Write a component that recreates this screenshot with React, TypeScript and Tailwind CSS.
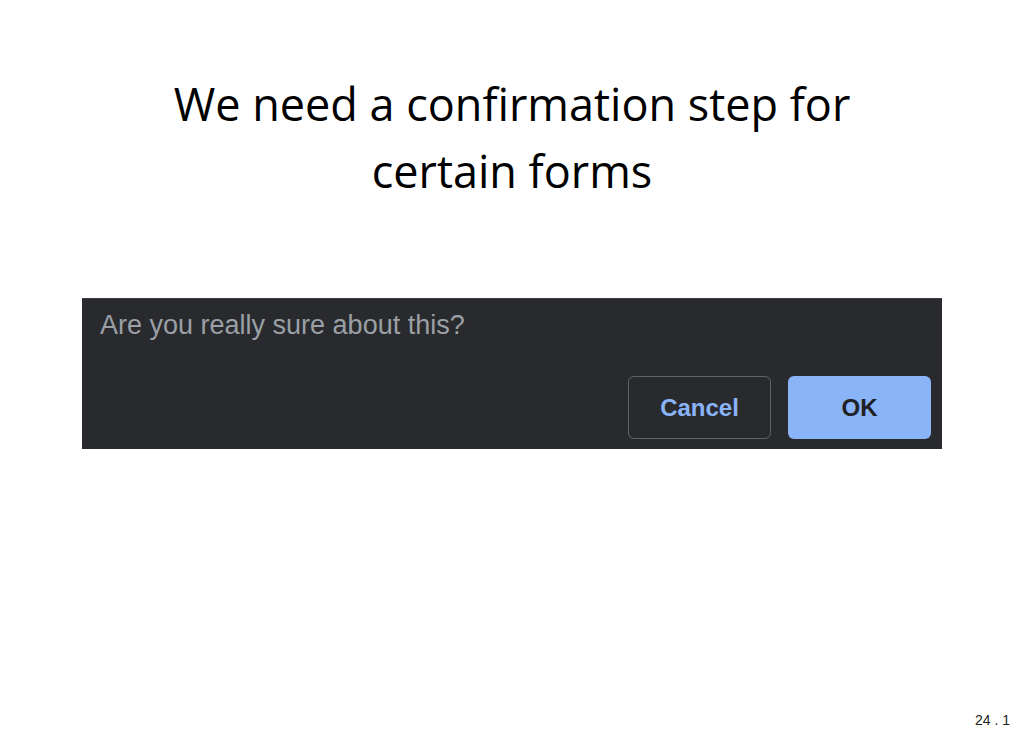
import React from 'react';

export default function App() {
  return (
    <div className="relative h-[747px] w-full overflow-hidden bg-white">
      <div className="flex flex-col items-center pt-[70px]">
        {/* Slide title */}
        <h1
          className="text-center text-[45px] leading-[67px] text-black"
          style={{ fontFamily: '"Open Sans", "Noto Sans", sans-serif' }}
        >
          We need a confirmation step for
          <br />
          certain forms
        </h1>

        {/* Browser confirm dialog screenshot */}
        <div
          className="mt-[94px] flex h-[151px] w-[860px] flex-col border-t border-[#3c3d40] bg-[#292a2d] pl-[18px] pr-[11px] pt-[10px]"
          style={{ fontFamily: '"Liberation Sans", Arial, sans-serif' }}
        >
          <p className="text-[27px] leading-[32px] text-[#9aa0a6]">Are you really sure about this?</p>
          <div className="mt-[35px] flex justify-end gap-[17px]">
            <button className="h-[63px] w-[143px] rounded-[6px] border border-[#5f6368] text-[24px] font-semibold text-[#8ab4f8]">
              Cancel
            </button>
            <button className="h-[63px] w-[143px] rounded-[6px] bg-[#8ab4f8] text-[24px] font-semibold text-[#202124]">
              OK
            </button>
          </div>
        </div>
      </div>

      <span
        className="absolute bottom-[16px] right-[14px] text-[14px] text-[#222]"
        style={{ fontFamily: '"Liberation Sans", Arial, sans-serif' }}
      >
        24 . 1
      </span>
    </div>
  );
}
